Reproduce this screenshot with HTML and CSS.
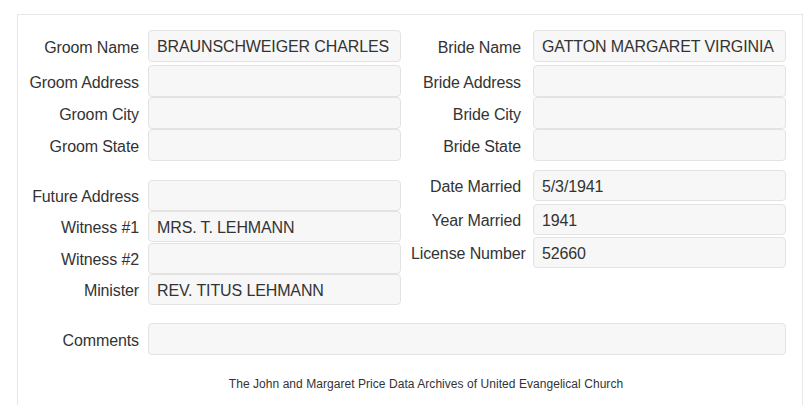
FILE: index.html
```html
<!DOCTYPE html>
<html>
<head>
<meta charset="utf-8">
<link rel="stylesheet" href="styles.css">
</head>
<body>
<div class="panel">
  <div class="section s1">
    <div class="half left">
      <div class="field"><label>Groom Name</label><div class="input">BRAUNSCHWEIGER CHARLES</div></div>
      <div class="field g3"><label>Groom Address</label><div class="input"></div></div>
      <div class="field"><label>Groom City</label><div class="input"></div></div>
      <div class="field"><label>Groom State</label><div class="input"></div></div>
    </div>
    <div class="half right">
      <div class="field"><label>Bride Name</label><div class="input">GATTON MARGARET VIRGINIA</div></div>
      <div class="field g3"><label>Bride Address</label><div class="input"></div></div>
      <div class="field"><label>Bride City</label><div class="input"></div></div>
      <div class="field"><label>Bride State</label><div class="input"></div></div>
    </div>
  </div>
  <div class="section s2">
    <div class="half left lower">
      <div class="field short"><label>Future Address</label><div class="input"></div></div>
      <div class="field short"><label>Witness #1</label><div class="input">MRS. T. LEHMANN</div></div>
      <div class="field short g1"><label>Witness #2</label><div class="input"></div></div>
      <div class="field short"><label>Minister</label><div class="input">REV. TITUS LEHMANN</div></div>
    </div>
    <div class="half right">
      <div class="field short"><label>Date Married</label><div class="input">5/3/1941</div></div>
      <div class="field short g3"><label>Year Married</label><div class="input">1941</div></div>
      <div class="field short g2"><label>License Number</label><div class="input">52660</div></div>
    </div>
  </div>
  <div class="field comments"><label>Comments</label><div class="input"></div></div>
  <p class="footer">The John and Margaret Price Data Archives of United Evangelical Church</p>
</div>
</body>
</html>
```
FILE: styles.css
```css
html, body {
  margin: 0;
  padding: 0;
  background: #fff;
}
body {
  font-family: "Liberation Sans", Arial, sans-serif;
  color: #333;
  font-size: 16px;
}
.panel {
  margin: 14px 2px 0 17px;
  border: 1px solid #e6e6e6;
  padding: 15px 16px 40px 11px;
}
.section {
  display: flex;
  gap: 10px;
}
.half {
  display: flex;
  flex-direction: column;
}
.half.left { width: 372px; }
.half.right { width: 375px; }
.field {
  display: flex;
  align-items: center;
  height: 32px;
  letter-spacing: -0.12px;
}
.field.short { height: 31px; }
.field.g1 { margin-top: 1px; }
.field.g2 { margin-top: 2px; }
.field.g3 { margin-top: 3px; }
.field label {
  width: 110px;
  flex: none;
  text-align: right;
  white-space: nowrap;
  margin-right: 9px;
  padding-top: 3px;
}
.right .field label { margin-right: 12px; }
.input {
  flex: 1;
  height: 100%;
  box-sizing: border-box;
  background: #f7f7f7;
  border: 1px solid #e3e3e3;
  border-radius: 4px;
  padding: 2px 8px 0 8px;
  display: flex;
  align-items: center;
  white-space: nowrap;
  color: #333;
}
.s2 { margin-top: 9px; }
.half.lower { padding-top: 10px; }
.comments { margin-top: 18px; }
.footer {
  margin: 21px 0 0 0;
  padding-left: 37px;
  text-align: center;
  font-size: 12px;
  line-height: 17px;
  letter-spacing: 0.05px;
  color: #333;
}
```
